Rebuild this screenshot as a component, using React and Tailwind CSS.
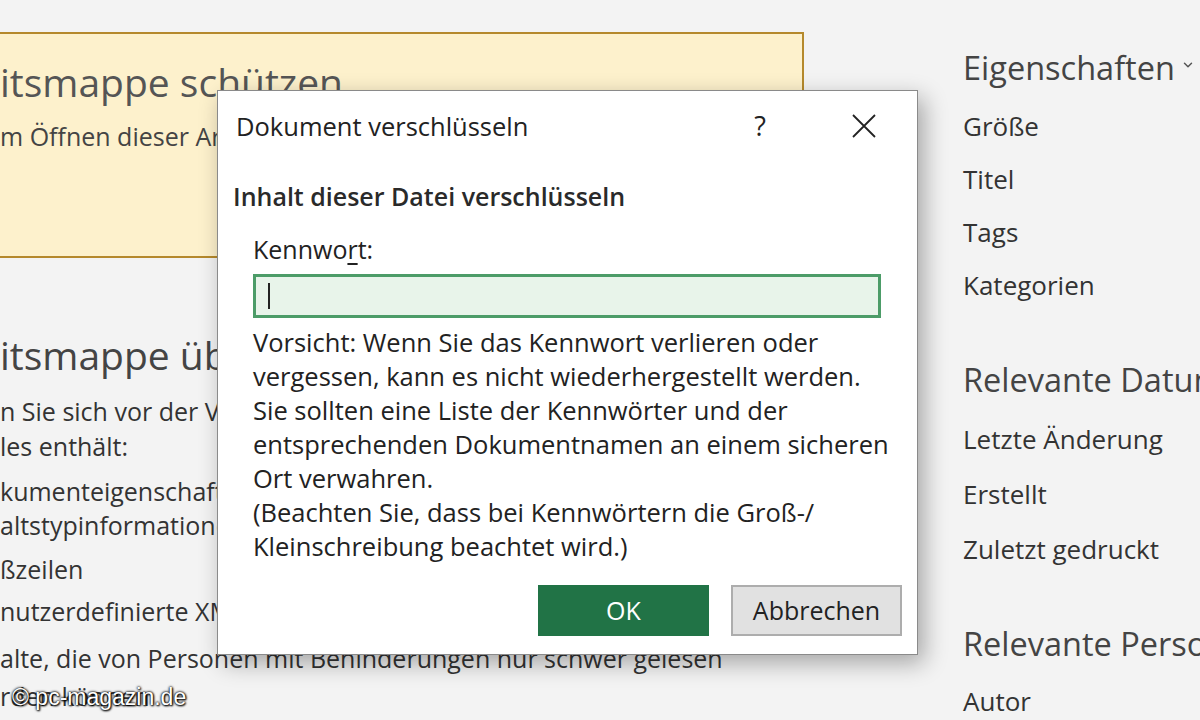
import { ChevronDown } from "lucide-react"

const font = "font-['Segoe_UI','Open_Sans','Noto_Sans',sans-serif]"

function LeftPane() {
  return (
    <div className="w-[963px] shrink-0 pt-[32px] text-[#333]">
      <div className="w-[804px] h-[226px] bg-[#fdf1cc] border-2 border-l-0 border-[#b5892c] pt-[26px]">
        <p className="text-[39px] leading-[44px] text-[#555] whitespace-nowrap">itsmappe schützen</p>
        <p className="mt-[16px] text-[25px] leading-[32px] text-[#444] whitespace-nowrap">
          m Öffnen dieser Arbeitsmappe ein Kennwort verlangen.
        </p>
      </div>

      <p className="mt-[75px] text-[39px] leading-[44px] text-[#444] whitespace-nowrap">itsmappe überprüfen</p>
      <div className="mt-[17px] text-[25px] leading-[35px] whitespace-nowrap">
        <p>n Sie sich vor der Veröffentlichung dieser Datei, dass sie</p>
        <p>les enthält:</p>
      </div>
      <ul className="text-[25px] leading-[34px] whitespace-nowrap">
        <li className="mt-[10px]">
          <p>kumenteigenschaften, Druckerpfad und Autorname</p>
          <p>altstypinformationen</p>
        </li>
        <li className="mt-[10px]">ßzeilen</li>
        <li className="mt-[8px]">nutzerdefinierte XML-Daten</li>
        <li className="mt-[11px] leading-[38px]">
          <p>alte, die von Personen mit Behinderungen nur schwer gelesen</p>
          <p>rden können</p>
        </li>
      </ul>
    </div>
  )
}

function RightPane() {
  const dates = ["Letzte Änderung", "Erstellt", "Zuletzt gedruckt"]
  return (
    <div className="flex-1 pt-[48px] text-[#333] whitespace-nowrap">
      <div className="flex items-center gap-[6px] text-[32.5px] leading-[40px] text-[#444]">
        Eigenschaften
        <ChevronDown size={14} strokeWidth={2.5} className="text-[#555] -mt-[6px]" />
      </div>
      <div className="mt-[12px] text-[26px] leading-[53px]">
        <p>Größe</p>
        <p>Titel</p>
        <p>Tags</p>
        <p>Kategorien</p>
      </div>

      <p className="mt-[48px] text-[32.5px] leading-[40px] text-[#444]">Relevante Datumsangaben</p>
      <div className="mt-[12px] text-[26px] leading-[55px]">
        {dates.map((d) => (
          <p key={d}>{d}</p>
        ))}
      </div>

      <p className="mt-[47px] text-[32.5px] leading-[40px] text-[#444]">Relevante Personen</p>
      <p className="mt-[10px] text-[26px] leading-[55px]">Autor</p>
    </div>
  )
}

function EncryptDialog() {
  return (
    <div className="absolute left-[217px] top-[90px] w-[701px] h-[565px] bg-white border border-[#8a8a8a] shadow-[6px_8px_22px_rgba(0,0,0,0.32)] text-[#222]">
      <div className="flex items-center h-[32px] mt-[19px] pl-[18px]">
        <span className="text-[25.5px] leading-[32px] flex-1">Dokument verschlüsseln</span>
        <span className="text-[27px] leading-[32px] w-[20px] text-center">?</span>
        <span className="ml-[82px] mr-[41px] w-[24px] h-[24px]">
          <svg width="24" height="24" viewBox="0 0 24 24" fill="none" stroke="#222" strokeWidth="1.8">
            <path d="M1 1 L23 23 M23 1 L1 23" />
          </svg>
        </span>
      </div>

      <p className="mt-[39px] pl-[15px] text-[25px] leading-[30px] font-semibold text-[#2a2a2a]">
        Inhalt dieser Datei verschlüsseln
      </p>

      <div className="pl-[35px] pr-[36px]">
        <p className="mt-[23px] text-[25px] leading-[30px]">
          Kennwo<span className="underline underline-offset-[4px]">r</span>t:
        </p>
        <div className="mt-[10px] h-[44px] border-[3px] border-[#4c9c68] bg-[#e8f4ea] flex items-center pl-[12px]">
          <span className="w-[2px] h-[26px] bg-[#222]" />
        </div>
        <div className="mt-[7px] text-[25.5px] leading-[34px] text-[#222] whitespace-nowrap">
          <p>Vorsicht: Wenn Sie das Kennwort verlieren oder</p>
          <p>vergessen, kann es nicht wiederhergestellt werden.</p>
          <p>Sie sollten eine Liste der Kennwörter und der</p>
          <p>entsprechenden Dokumentnamen an einem sicheren</p>
          <p>Ort verwahren.</p>
          <p>(Beachten Sie, dass bei Kennwörtern die Groß-/</p>
          <p>Kleinschreibung beachtet wird.)</p>
        </div>
      </div>

      <div className="mt-[22px] flex justify-end gap-[22px] pr-[15px]">
        <button className="w-[171px] h-[51px] bg-[#217346] text-white text-[25px]">OK</button>
        <button className="w-[171px] h-[51px] bg-[#e1e1e1] border-2 border-[#adadad] text-[#222] text-[25px]">
          Abbrechen
        </button>
      </div>
    </div>
  )
}

export default function App() {
  return (
    <div className={`relative w-[1200px] h-[720px] overflow-hidden bg-[#f3f3f3] flex ${font}`}>
      <LeftPane />
      <RightPane />
      <EncryptDialog />
      <div className="absolute left-[12px] top-[682px] text-[23px] leading-[30px] text-white font-['Liberation_Sans',Arial,sans-serif] [text-shadow:0_0_2px_#000,0_0_3px_#000,1px_1px_2px_#000]">
        © pc-magazin.de
      </div>
    </div>
  )
}
